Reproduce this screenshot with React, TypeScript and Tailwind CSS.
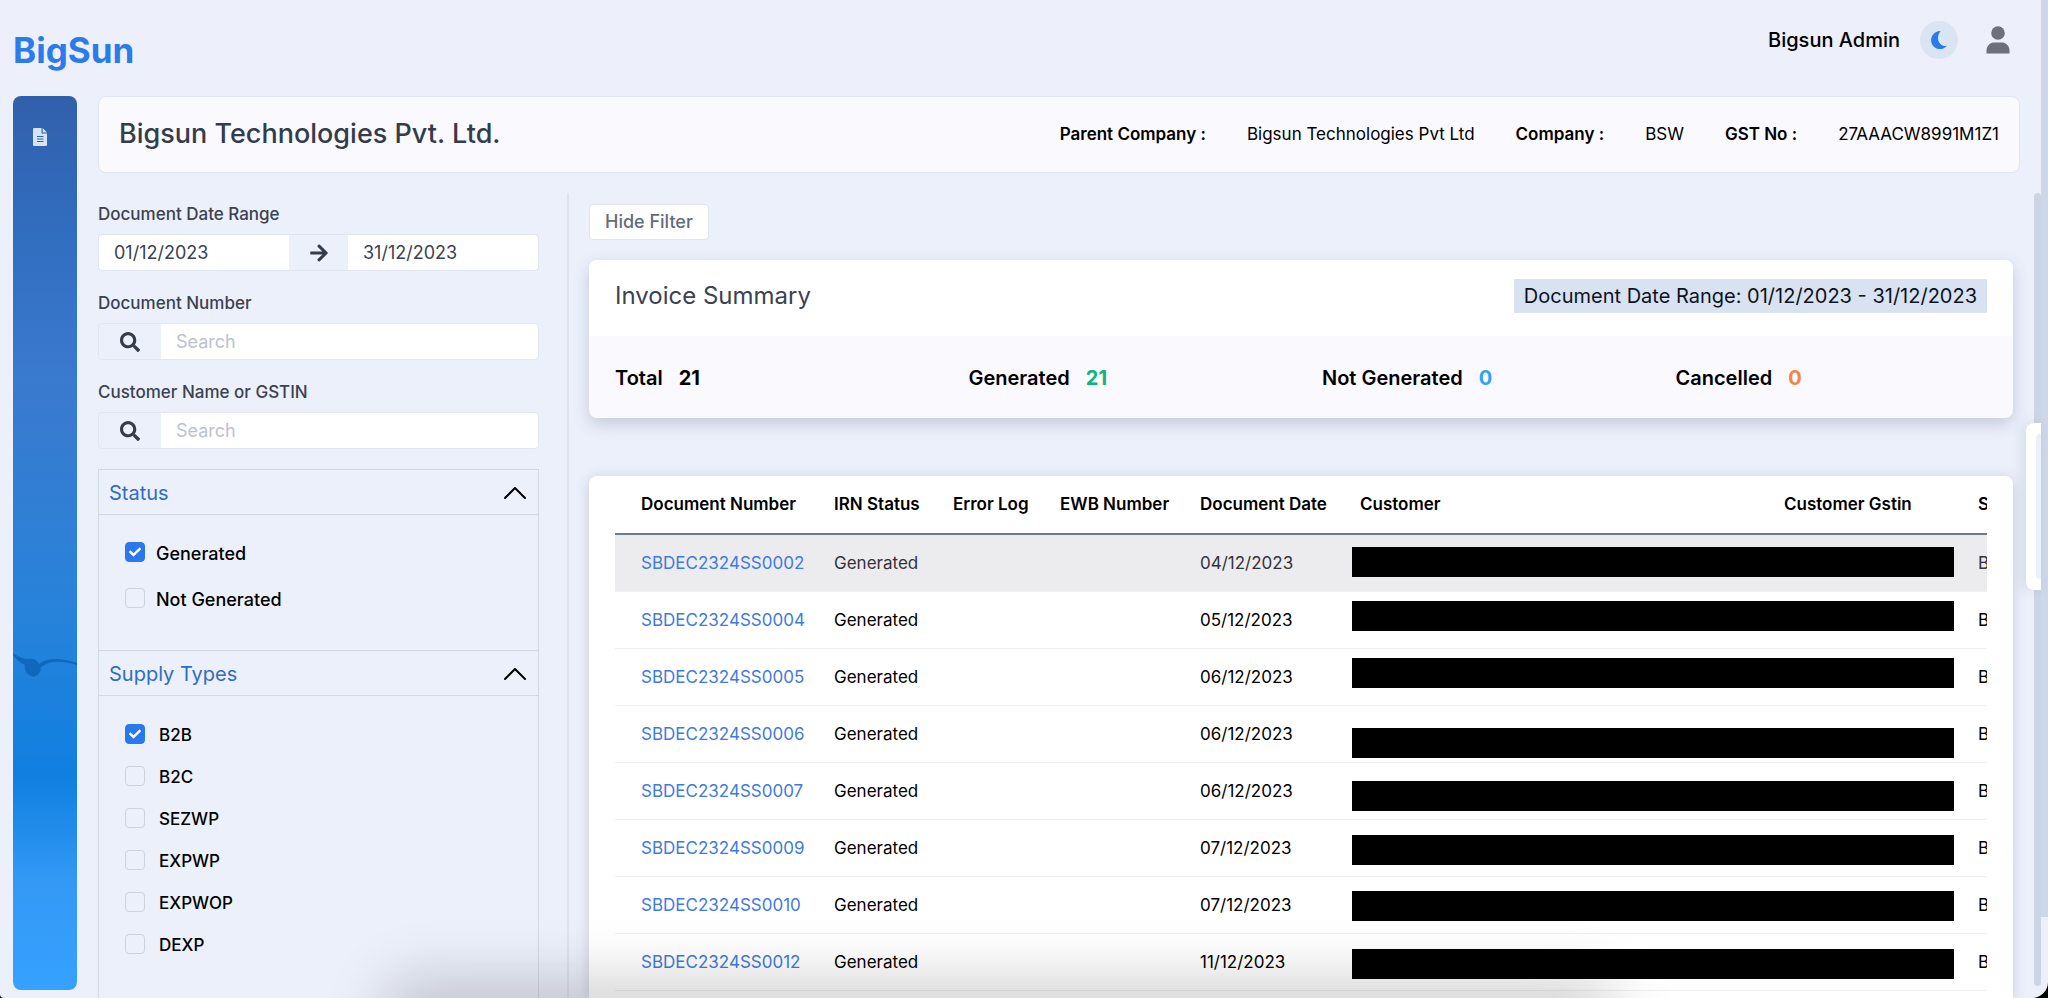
import { useState } from "react";
import { FaArrowRight, FaCheck, FaSearch } from "react-icons/fa";

type Option = { label: string; checked: boolean };

const companyInfo = [
  { label: "Parent Company :", value: "Bigsun Technologies Pvt Ltd" },
  { label: "Company :", value: "BSW" },
  { label: "GST No :", value: "27AAACW8991M1Z1" },
];

const stats = [
  { label: "Total", value: 21, color: "text-black" },
  { label: "Generated", value: 21, color: "text-[#10b27f]" },
  { label: "Not Generated", value: 0, color: "text-[#2ea3f2]" },
  { label: "Cancelled", value: 0, color: "text-[#f5853f]" },
];

const statusOptions: Option[] = [
  { label: "Generated", checked: true },
  { label: "Not Generated", checked: false },
];

const supplyOptions: Option[] = [
  { label: "B2B", checked: true },
  { label: "B2C", checked: false },
  { label: "SEZWP", checked: false },
  { label: "EXPWP", checked: false },
  { label: "EXPWOP", checked: false },
  { label: "DEXP", checked: false },
];

// mask: distance of the black cover from the top of its row
const invoices = [
  { number: "SBDEC2324SS0002", date: "04/12/2023", mask: 12 },
  { number: "SBDEC2324SS0004", date: "05/12/2023", mask: 9 },
  { number: "SBDEC2324SS0005", date: "06/12/2023", mask: 9 },
  { number: "SBDEC2324SS0006", date: "06/12/2023", mask: 22 },
  { number: "SBDEC2324SS0007", date: "06/12/2023", mask: 18 },
  { number: "SBDEC2324SS0009", date: "07/12/2023", mask: 15 },
  { number: "SBDEC2324SS0010", date: "07/12/2023", mask: 14 },
  { number: "SBDEC2324SS0012", date: "11/12/2023", mask: 15 },
];

function Header() {
  return (
    <header className="flex h-24 shrink-0 justify-between bg-[#edeffb] pl-[13px] pr-[38px]">
      <div className="pt-7 text-[35px] leading-[44px] font-bold text-[#2b7be9]">BigSun</div>
      <div className="flex h-20 items-center">
        <span className="text-xl font-medium text-black">Bigsun Admin</span>
        <button aria-label="Dark mode" className="ml-5 flex size-[38px] items-center justify-center rounded-full bg-[#dae4f2]">
          <svg viewBox="0 0 20 20" className="size-5" fill="#2b7be9">
            <path d="M11.6 1.1A9 9 0 1 0 18 15.8C11 17.2 5.6 8.6 11.6 1.1Z" />
          </svg>
        </button>
        <button aria-label="Account" className="ml-7">
          <svg viewBox="0 0 24 28" className="h-7 w-6" fill="#6d6f7b">
            <circle cx="12" cy="7" r="6.8" />
            <path d="M0.5 27.6v-3C0.5 19 5 16.4 8 16.4h8c3 0 7.500 2.600 7.500 8.200v3Z" />
          </svg>
        </button>
      </div>
    </header>
  );
}

function Sidebar() {
  return (
    <nav className="relative mb-2 w-16 shrink-0 overflow-hidden rounded-lg bg-[linear-gradient(180deg,#3160ab_0%,#316dbf_15%,#3a7acf_32%,#2783da_58%,#107fe0_76%,#3399f5_88%,#36a1ff_100%)]">
      <a href="#documents" aria-label="Documents" className="flex pt-8 pl-5">
        <svg viewBox="0 0 14 18" className="h-[18px] w-3.5" fill="#d5e3f4">
          <path d="M1 0h7.500v5.500H14V17a1 1 0 0 1-1 1H1a1 1 0 0 1-1-1V1a1 1 0 0 1 1-1Z" />
          <path d="M9.600 0 14 4.400H9.600Z" />
          <path d="M4 8.500h6.500M4 11h6.500M4 13.500h6.500" stroke="#3160ab" strokeWidth="1" />
        </svg>
      </a>
      <svg viewBox="0 0 64 28" className="absolute top-[556px] left-0 h-7 w-16" fill="#0f68bd">
        <path d="M0 1c6 4 10 6 16 6 6-1 8 2 10 5 8-6 20-7 38-1v2c-16-5-28-4-36 2 0 5-3 9-8 10-6-2-9-7-8-12C7 11 3 7 0 3Z" />
      </svg>
    </nav>
  );
}

function CompanyCard() {
  return (
    <section className="flex h-[77px] shrink-0 items-center justify-between rounded-lg border border-[#dfe4ef] bg-[#f9f9fe] px-5">
      <h1 className="text-[27px] font-medium text-[#353c49]">Bigsun Technologies Pvt. Ltd.</h1>
      <dl className="flex gap-[41px] text-[17px] text-black">
        {companyInfo.map((item) => (
          <div key={item.label} className="flex gap-[41px]">
            <dt className="font-semibold">{item.label}</dt>
            <dd>{item.value}</dd>
          </div>
        ))}
      </dl>
    </section>
  );
}

function SearchField({ id, label }: { id: string; label: string }) {
  return (
    <div>
      <label htmlFor={id} className="block text-[17px] leading-6 font-medium text-[#3b4250]">
        {label}
      </label>
      <div className="mt-2 flex h-[37px] rounded border border-[#e3e7f1]">
        <span className="flex w-[62px] items-center justify-center text-[#353c49]">
          <FaSearch className="size-5" />
        </span>
        <input id={id} type="text" placeholder="Search" className="min-w-0 flex-1 rounded-r bg-white px-[15px] text-lg placeholder:text-[#bcc2ce]" />
      </div>
    </div>
  );
}

function CheckRow({ option, rowClass }: { option: Option; rowClass: string }) {
  const [checked, setChecked] = useState(option.checked);
  return (
    <label className={`flex h-5 items-center font-medium text-black ${rowClass}`}>
      <span className="relative flex size-5">
        <input
          type="checkbox"
          checked={checked}
          onChange={() => setChecked(!checked)}
          className="size-5 appearance-none rounded border border-[#cdd2de] checked:border-[#2b78ec] checked:bg-[#2b78ec]"
        />
        {checked && <FaCheck className="pointer-events-none absolute inset-0 m-auto size-3 text-white" />}
      </span>
      <span className="pt-1">{option.label}</span>
    </label>
  );
}

function PanelHeader({ title }: { title: string }) {
  return (
    <button className="flex h-[46px] w-full items-center justify-between border-y border-[#d3d8e2] pt-px pr-3 pl-2.5 text-xl text-[#2f6dc2]">
      {title}
      <svg viewBox="0 0 22 12" className="h-3 w-[22px]" fill="none" stroke="#000" strokeWidth="2" strokeLinecap="round" strokeLinejoin="round">
        <path d="m1 11 10-10 10 10" />
      </svg>
    </button>
  );
}

function Filters() {
  return (
    <aside className="w-[471px] shrink-0 border-r-2 border-[#dde2ed] pt-[9px] pr-7">
      <div className="flex flex-col gap-5">
        <fieldset>
          <legend className="text-[17px] leading-6 font-medium text-[#3b4250]">Document Date Range</legend>
          <div className="mt-2 flex h-[37px] rounded border border-[#dfe4ef] text-lg text-[#3b4250]">
            <input aria-label="From date" defaultValue="01/12/2023" className="w-0 flex-1 rounded-l bg-white px-[15px]" />
            <span className="flex w-[59px] items-center justify-center text-[#353c49]">
              <FaArrowRight className="size-5" />
            </span>
            <input aria-label="To date" defaultValue="31/12/2023" className="w-0 flex-1 rounded-r bg-white px-[15px]" />
          </div>
        </fieldset>
        <SearchField id="document-number" label="Document Number" />
        <SearchField id="customer" label="Customer Name or GSTIN" />
      </div>

      <div className="mt-5 border-x border-[#d3d8e2]">
        <PanelHeader title="Status" />
        <div className="flex h-[135px] flex-col gap-[26px] pt-[27px] pl-[26px]">
          {statusOptions.map((option) => (
            <CheckRow key={option.label} option={option} rowClass="gap-[11px] text-lg" />
          ))}
        </div>
        <PanelHeader title="Supply Types" />
        <div className="flex flex-col gap-[22px] pt-7 pb-16 pl-[26px]">
          {supplyOptions.map((option) => (
            <CheckRow key={option.label} option={option} rowClass="gap-[14px] text-[17px]" />
          ))}
        </div>
      </div>
    </aside>
  );
}

function InvoiceSummary() {
  return (
    <section className="shrink-0 overflow-hidden rounded-lg bg-[#f9f9fe] shadow-[0_6px_16px_rgba(60,70,90,0.22)]">
      <div className="flex h-[76px] items-center justify-between bg-white px-[26px] pb-1">
        <h2 className="text-2xl text-[#3b4250]">Invoice Summary</h2>
        <span className="bg-[#d8e2f0] px-2.5 py-[3px] text-xl text-[#0c1322]">Document Date Range: 01/12/2023 - 31/12/2023</span>
      </div>
      <div className="grid h-[82px] grid-cols-4 items-center gap-[42px] px-[26px] pt-0.5 text-xl">
        {stats.map((stat) => (
          <div key={stat.label} className="flex gap-4">
            <span className="font-semibold text-black">{stat.label}</span>
            <span className={`font-bold ${stat.color}`}>{stat.value}</span>
          </div>
        ))}
      </div>
    </section>
  );
}

function InvoiceTable() {
  return (
    <section className="flex-1 rounded-t-lg bg-white px-[26px] shadow-[0_2px_14px_rgba(60,70,90,0.2)]">
      <div className="overflow-hidden">
        <table className="w-[1560px] table-fixed border-separate border-spacing-0 text-left text-[17px] text-black">
          <colgroup>
            <col className="w-[203px]" />
            <col className="w-[119px]" />
            <col className="w-[107px]" />
            <col className="w-[140px]" />
            <col className="w-[160px]" />
            <col className="w-[424px]" />
            <col className="w-[194px]" />
            <col />
          </colgroup>
          <thead>
            <tr className="h-[59px] whitespace-nowrap [&>th]:border-b-2 [&>th]:border-[#6d7a8a] [&>th]:px-4 [&>th]:font-semibold">
              <th className="pl-[26px]!">Document Number</th>
              <th>IRN Status</th>
              <th>Error Log</th>
              <th>EWB Number</th>
              <th>Document Date</th>
              <th>Customer</th>
              <th>Customer Gstin</th>
              <th>S</th>
            </tr>
          </thead>
          <tbody>
            {invoices.map((invoice) => (
              <tr
                key={invoice.number}
                className="h-[57px] first:bg-[#ecebee] first:text-[#333338] [&>td]:border-b [&>td]:border-[#eff0f3] [&>td]:px-4 [&>td]:pt-0.5"
              >
                <td className="pl-[26px]!">
                  <a href={`#${invoice.number}`} className="text-[#3f7bdc]">
                    {invoice.number}
                  </a>
                </td>
                <td>Generated</td>
                <td />
                <td />
                <td>{invoice.date}</td>
                <td colSpan={2} className="relative">
                  <div className="absolute right-2 left-2 h-[30px] bg-black" style={{ top: invoice.mask }} />
                </td>
                <td>B</td>
              </tr>
            ))}
          </tbody>
        </table>
      </div>
    </section>
  );
}

export default function App() {
  return (
    <div className="bg-black">
      <div className="relative flex h-screen flex-col overflow-hidden rounded-br-2xl rounded-bl bg-[#ecf0fb] font-['Inter',sans-serif]">
        <Header />
        <div className="flex min-h-0 flex-1 pr-7 pl-[13px]">
          <Sidebar />
          <main className="ml-[21px] flex min-w-0 flex-1 flex-col">
            <CompanyCard />
            <div className="mt-5 flex min-h-0 flex-1">
              <Filters />
              <div className="flex min-w-0 flex-1 flex-col pt-[11px] pr-[7px] pl-5">
                <button className="mb-5 h-9 shrink-0 self-start rounded border border-[#e0e5ef] bg-white px-[15px] text-lg font-medium text-[#646c7a]">
                  Hide Filter
                </button>
                <InvoiceSummary />
                <div className="h-[58px] shrink-0" />
                <InvoiceTable />
              </div>
            </div>
          </main>
        </div>

        {/* Scrollbars and side tab */}
        <div className="absolute top-0 right-0 h-[917px] w-[7px] bg-[#cdd7e7]" />
        <div className="absolute top-[193px] right-[7px] bottom-3 w-[7px] rounded-full bg-[#cbd5e5]" />
        <div className="absolute top-[423px] right-[7px] h-[167px] w-[15px] rounded-l-lg bg-white py-[11px] pl-2.5 shadow-[-4px_0_12px_rgba(60,70,90,0.12)]">
          <div className="h-full rounded-l bg-[#ebf1fb]" />
        </div>
        {/* Shade along the bottom edge */}
        <div className="pointer-events-none absolute bottom-[-40px] left-[400px] h-10 w-[1200px] rounded-full shadow-[0_0_60px_20px_rgba(0,0,0,0.18)]" />
      </div>
    </div>
  );
}
